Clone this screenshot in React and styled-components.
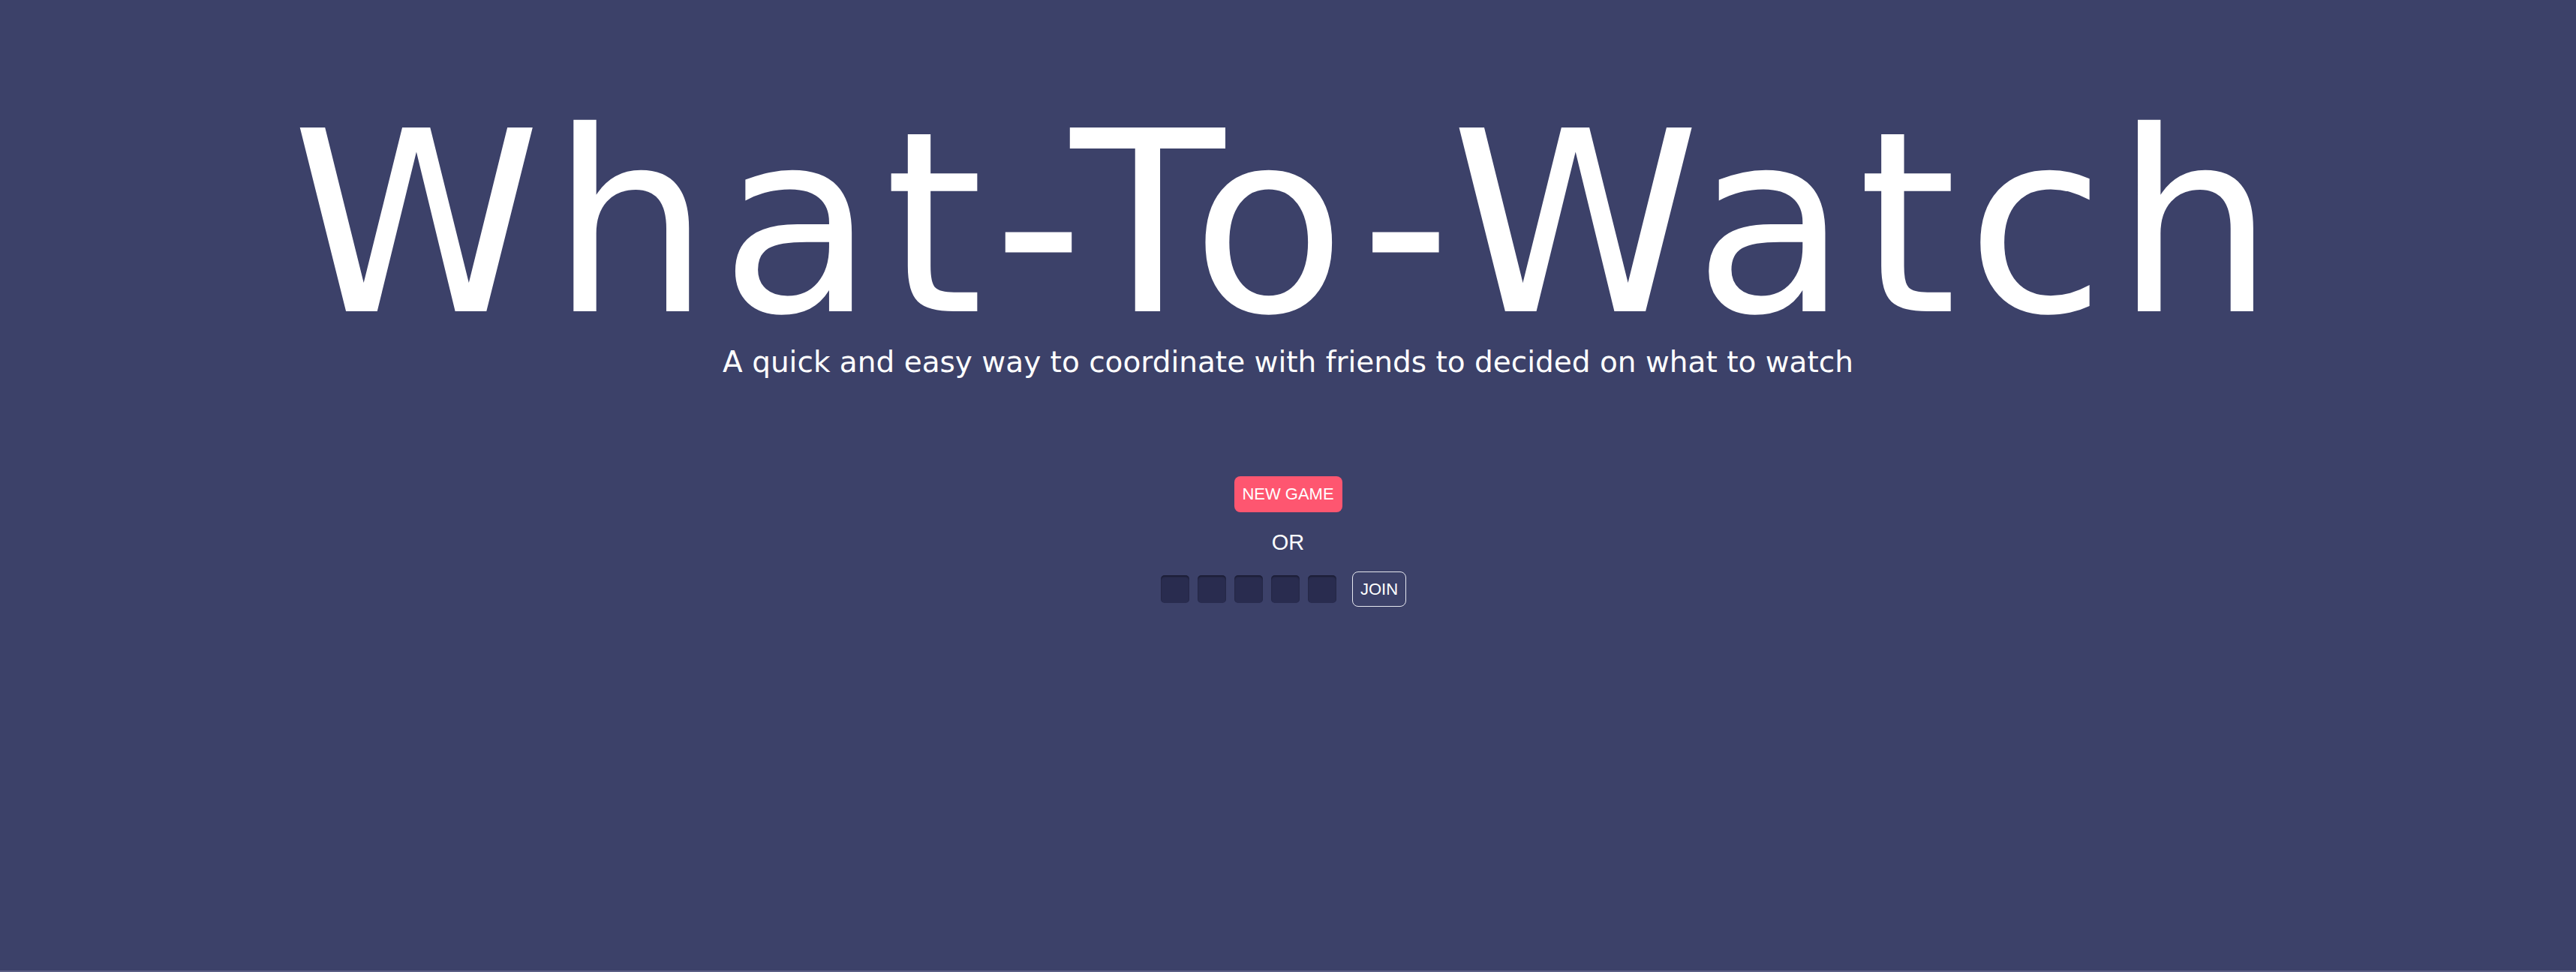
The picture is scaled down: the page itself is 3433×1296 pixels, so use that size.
import React from "react";
import styled, { createGlobalStyle } from "styled-components";

const GlobalStyle = createGlobalStyle`
  html, body {
    margin: 0;
    padding: 0;
    background-color: #3c4169;
  }
  * {
    box-sizing: border-box;
  }
`;

const Page = styled.div`
  min-height: 100vh;
  background-color: #3c4169;
  border-bottom: 2px solid #5b5f85;
  display: flex;
  flex-direction: column;
  align-items: center;
  padding-top: 148px;
  color: #ffffff;
`;

const Title = styled.h1`
  margin: 0;
  font-family: "DejaVu Sans", sans-serif;
  font-weight: 400;
  font-size: 336px;
  line-height: 0.9;
  letter-spacing: 13px;
  color: #ffffff;
`;

const Subtitle = styled.p`
  margin: 13px 0 0 0;
  font-family: "DejaVu Sans", sans-serif;
  font-size: 39px;
  line-height: 1;
  color: #ffffff;
`;

const Actions = styled.div`
  display: flex;
  flex-direction: column;
  align-items: center;
  margin-top: 133px;
`;

const NewGameButton = styled.button`
  width: 144px;
  height: 48px;
  border: none;
  border-radius: 8px;
  background-color: #fe5670;
  color: #ffffff;
  font-family: "Liberation Sans", Arial, sans-serif;
  font-size: 22px;
  cursor: pointer;
  padding: 0;
`;

const Or = styled.div`
  margin-top: 26px;
  font-family: "Liberation Sans", Arial, sans-serif;
  font-size: 29px;
  line-height: 1;
  color: #ffffff;
`;

const JoinRow = styled.form`
  display: flex;
  align-items: center;
  margin-top: 24px;
  margin-left: -12px;
`;

const CodeBox = styled.input`
  width: 38px;
  height: 37px;
  margin-right: 11px;
  border: none;
  border-radius: 5px;
  background-color: #292c4f;
  box-shadow: inset 0 2px 2px rgba(0, 0, 0, 0.35);
  color: #ffffff;
  text-align: center;
  font-family: "Liberation Sans", Arial, sans-serif;
  font-size: 22px;
  outline: none;
  padding: 0;
`;

const JoinButton = styled.button`
  width: 72px;
  height: 47px;
  margin-left: 10px;
  border: 1.5px solid #e6e7ef;
  border-radius: 8px;
  background: transparent;
  color: #ffffff;
  font-family: "Liberation Sans", Arial, sans-serif;
  font-size: 22px;
  cursor: pointer;
  padding: 0;
`;

export default function App() {
  const slots = [0, 1, 2, 3, 4];
  return (
    <>
      <GlobalStyle />
      <Page>
        <Title>What-To-Watch</Title>
        <Subtitle>
          A quick and easy way to coordinate with friends to decided on what to
          watch
        </Subtitle>
        <Actions>
          <NewGameButton>NEW GAME</NewGameButton>
          <Or>OR</Or>
          <JoinRow onSubmit={(e) => e.preventDefault()}>
            {slots.map((i) => (
              <CodeBox key={i} maxLength={1} />
            ))}
            <JoinButton>JOIN</JoinButton>
          </JoinRow>
        </Actions>
      </Page>
    </>
  );
}
